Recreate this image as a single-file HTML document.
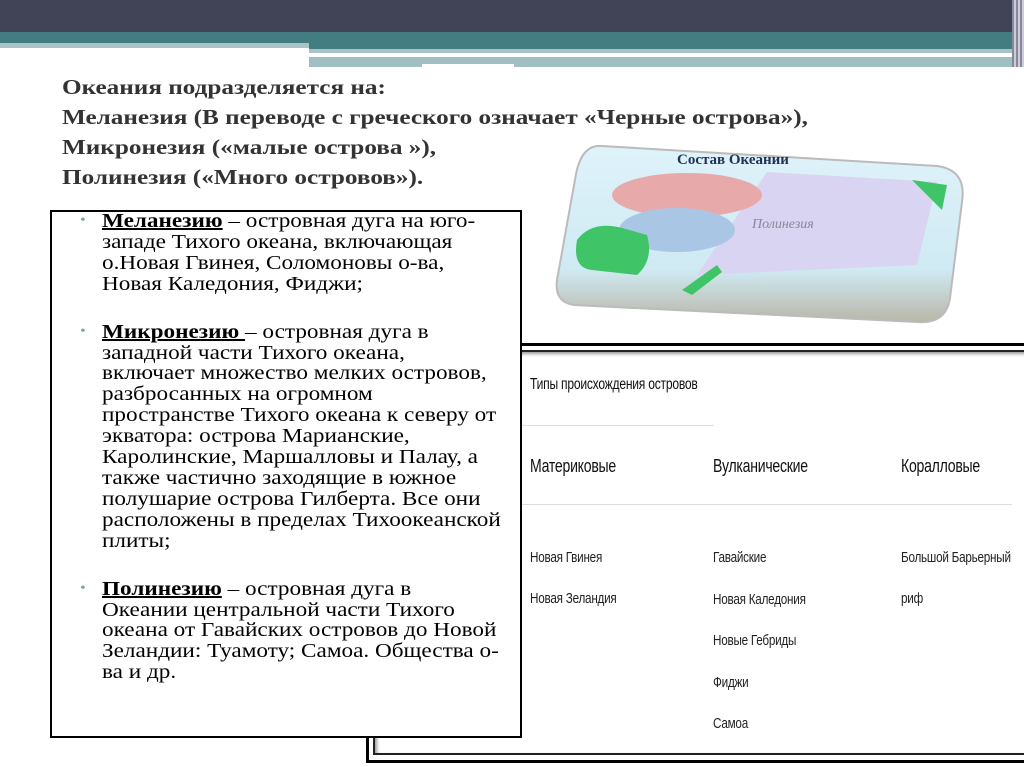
<!DOCTYPE html>
<html><head><meta charset="utf-8"><style>
*{margin:0;padding:0;box-sizing:border-box}
body{width:1024px;height:767px;position:relative;background:#fff;overflow:hidden;font-family:"Liberation Serif",serif}
.a{position:absolute}
.title{left:62px;top:72px;font-weight:bold;font-size:21px;color:#333;line-height:30px;white-space:nowrap;transform:scaleX(1.2);transform-origin:left}
.box{left:50px;top:210px;width:472px;height:528px;border:2px solid #000;background:#fff}
.box ul{list-style:none;position:absolute;left:50px;top:-1px;white-space:nowrap;transform:scaleX(1.16);transform-origin:left}
.box li{position:relative;font-size:20px;line-height:20.9px;color:#000;margin-bottom:27px}
.box li:before{content:"•";position:absolute;left:-19px;color:#7aa;font-size:14px}
.box b{text-decoration:underline}
.tb{font-family:"Liberation Sans",sans-serif;font-size:15px;transform:scaleX(.78);transform-origin:left;color:#222;letter-spacing:-.3px;white-space:nowrap}
.h{font-size:18px;color:#111}
</style></head><body>
<div class="a" style="left:0;top:0;width:1024px;height:32px;background:#414356"></div>
<div class="a" style="left:0;top:32px;width:1024px;height:11px;background:#437d82"></div>
<div class="a" style="left:0;top:43px;width:309px;height:5px;background:#a9c3c6"></div>
<div class="a" style="left:309px;top:43px;width:715px;height:6px;background:#437d82"></div>
<div class="a" style="left:309px;top:49px;width:715px;height:4px;background:#a9c3c6"></div>
<div class="a" style="left:309px;top:53px;width:176px;height:4px;background:#fff"></div>
<div class="a" style="left:309px;top:57px;width:715px;height:10px;background:#a1bfc2"></div>
<div class="a" style="left:422px;top:64px;width:92px;height:4px;background:#fff"></div>
<div class="a" style="left:1012px;top:0;width:12px;height:67px;background:repeating-linear-gradient(90deg,#889 0 2px,#ccd 2px 4px)"></div>
<div class="a title">Океания подразделяется на:<br>Меланезия (В переводе с греческого означает «Черные острова»),<br>Микронезия («малые острова »),<br>Полинезия («Много островов»).</div>

<svg class="a" style="left:552px;top:140px" width="420" height="190" viewBox="0 0 420 190">
<defs><linearGradient id="g" x1="0" y1="0" x2="0" y2="1"><stop offset="0" stop-color="#dff2fa"/><stop offset=".7" stop-color="#cfeaf3"/><stop offset="1" stop-color="#b9b6a8"/></linearGradient></defs>
<path d="M50 6 L385 26 Q415 30 410 62 L398 158 Q394 184 366 182 L22 165 Q2 162 5 140 L24 34 Q30 4 50 6Z" fill="url(#g)" stroke="#bbb" stroke-width="2"/>
<path d="M215 32 L385 42 L365 125 L145 135 Z" fill="#d9d4f2"/>
<ellipse cx="135" cy="55" rx="75" ry="22" fill="#e8a9aa"/>
<ellipse cx="125" cy="90" rx="58" ry="22" fill="#a9c7e4"/>
<path d="M25 100 Q40 80 70 88 L95 95 Q102 120 85 135 L40 130 Q20 128 25 100Z" fill="#3fc468"/>
<path d="M130 150 L165 125 L170 132 L140 155Z" fill="#3fc468"/>
<path d="M360 40 L395 45 L390 70 Z" fill="#3fc468"/>
<text x="125" y="24" font-family="Liberation Serif,serif" font-weight="bold" font-size="15" fill="#235">Состав Океании</text>
<text x="200" y="88" font-family="Liberation Serif,serif" font-style="italic" font-size="14" fill="#889">Полинезия</text>
</svg>

<div class="a" style="left:366px;top:343px;width:670px;height:420px;border:3px solid #000;border-right:none"></div>
<div class="a" style="left:373px;top:350px;width:660px;height:405px;border:2px solid #222;border-right:none;box-shadow:inset 2px 2px 3px #999"></div>
<div class="a" style="left:487px;top:425px;width:227px;height:1px;background:#ddd"></div>
<div class="a" style="left:487px;top:504px;width:525px;height:1px;background:#ddd"></div>
<div class="a tb" style="left:530px;top:376px;font-size:15.5px;color:#111">Типы происхождения островов</div>
<div class="a tb h" style="left:530px;top:456px">Материковые</div>
<div class="a tb h" style="left:713px;top:456px">Вулканические</div>
<div class="a tb h" style="left:901px;top:456px">Коралловые</div>
<div class="a tb" style="left:530px;top:537px;line-height:41px">Новая Гвинея<br>Новая Зеландия</div>
<div class="a tb" style="left:713px;top:537px;line-height:41.5px">Гавайские<br>Новая Каледония<br>Новые Гебриды<br>Фиджи<br>Самоа</div>
<div class="a tb" style="left:901px;top:537px;line-height:41px">Большой Барьерный<br>риф</div>

<div class="a box"><ul>
<li><b>Меланезию</b> – островная дуга на юго-<br>западе Тихого океана, включающая<br>о.Новая Гвинея, Соломоновы о-ва,<br>Новая Каледония, Фиджи;</li>
<li><b>Микронезию </b> – островная дуга в<br>западной части Тихого океана,<br>включает множество мелких островов,<br>разбросанных на огромном<br>пространстве Тихого океана к северу от<br>экватора: острова Марианские,<br>Каролинские, Маршалловы и Палау, а<br>также частично заходящие в южное<br>полушарие острова Гилберта. Все они<br>расположены в пределах Тихоокеанской<br>плиты;</li>
<li><b>Полинезию</b> – островная дуга в<br>Океании центральной части Тихого<br>океана от Гавайских островов до Новой<br>Зеландии: Туамоту; Самоа. Общества о-<br>ва и др.</li>
</ul></div>
</body></html>
